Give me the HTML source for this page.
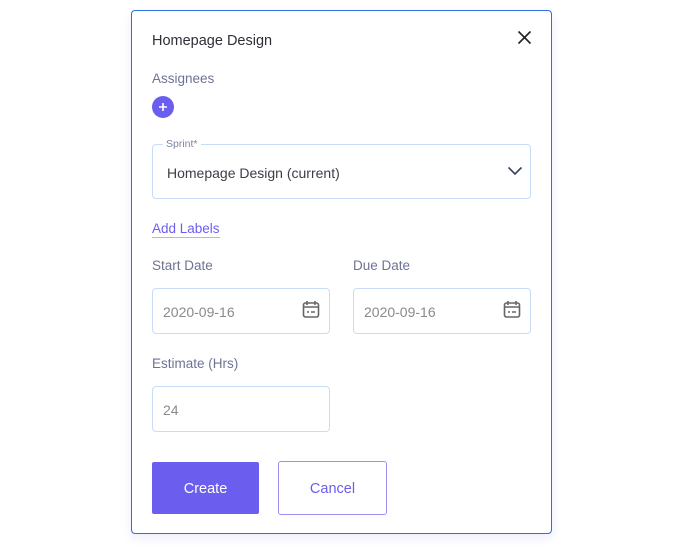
<!DOCTYPE html>
<html><head><style>
*{box-sizing:border-box;margin:0;padding:0}
body{width:684px;height:560px;background:#fff;font-family:"Liberation Sans",sans-serif;position:relative;overflow:hidden}
.card{position:absolute;left:131px;top:10px;width:421px;height:524px;border:1px solid #2f6fe0;border-radius:4px;box-shadow:0 4px 10px rgba(110,100,240,0.12)}
.a{position:absolute}
.lbl{color:#6e7394;font-size:13.5px}
.inp{position:absolute;border:1px solid #c9dcf7;border-radius:4px;height:46px;color:#8a8a8a;font-size:14px;padding-left:10px;line-height:46px}
</style></head><body>
<div class="card"></div>
<div class="a" style="left:152px;top:33px;font-size:14.5px;color:#2d2f38">Homepage Design</div>
<svg class="a" style="left:517px;top:30px" width="15" height="15" viewBox="0 0 15 15"><path d="M1.5 1.5L13.5 13.5M13.5 1.5L1.5 13.5" stroke="#222" stroke-width="1.6"/></svg>
<div class="a lbl" style="left:152px;top:71px">Assignees</div>
<div class="a" style="left:152px;top:96px;width:22px;height:22px;border-radius:50%;background:#6b5eee"></div>
<svg class="a" style="left:152px;top:96px" width="22" height="22" viewBox="0 0 22 22"><path d="M11 7v8M7 11h8" stroke="#fff" stroke-width="1.6"/></svg>
<div class="a" style="left:152px;top:144px;width:379px;height:55px;border:1px solid #c9dcf7;border-radius:4px"></div>
<div class="a" style="left:163px;top:138px;background:#fff;padding:0 3px;font-size:10.5px;color:#7e83a0">Sprint*</div>
<div class="a" style="left:167px;top:165px;font-size:14px;color:#3c3e48">Homepage Design (current)</div>
<svg class="a" style="left:507px;top:166px" width="16" height="10" viewBox="0 0 16 10"><path d="M1.5 1.5L8 8L14.5 1.5" stroke="#3a4060" stroke-width="1.6" fill="none"/></svg>
<div class="a" style="left:152px;top:221px;font-size:13.5px;color:#6b5eee;border-bottom:1px solid #b8b0f5;line-height:16px">Add Labels</div>
<div class="a lbl" style="left:152px;top:258px">Start Date</div>
<div class="a lbl" style="left:353px;top:258px">Due Date</div>
<div class="inp" style="left:152px;top:288px;width:178px">2020-09-16</div>
<div class="inp" style="left:353px;top:288px;width:178px">2020-09-16</div>
<svg class="a" style="left:302px;top:300px" width="18" height="19" viewBox="0 0 18 19"><rect x="1.5" y="3" width="15" height="14" rx="2" stroke="#666" stroke-width="1.6" fill="none"/><path d="M5 1v4M13 1v4M1.5 7h15M5 12h2M9 12h4" stroke="#666" stroke-width="1.6"/></svg>
<svg class="a" style="left:503px;top:300px" width="18" height="19" viewBox="0 0 18 19"><rect x="1.5" y="3" width="15" height="14" rx="2" stroke="#666" stroke-width="1.6" fill="none"/><path d="M5 1v4M13 1v4M1.5 7h15M5 12h2M9 12h4" stroke="#666" stroke-width="1.6"/></svg>
<div class="a lbl" style="left:152px;top:356px">Estimate (Hrs)</div>
<div class="inp" style="left:152px;top:386px;width:178px">24</div>
<div class="a" style="left:152px;top:462px;width:107px;height:52px;background:#6b5eee;border-radius:2px;color:#fff;font-size:14.5px;line-height:54px;text-align:center">Create</div>
<div class="a" style="left:278px;top:461px;width:109px;height:54px;border:1px solid #9a90f3;border-radius:3px;color:#6b5eee;font-size:14.5px;line-height:54px;text-align:center">Cancel</div>
</body></html>
